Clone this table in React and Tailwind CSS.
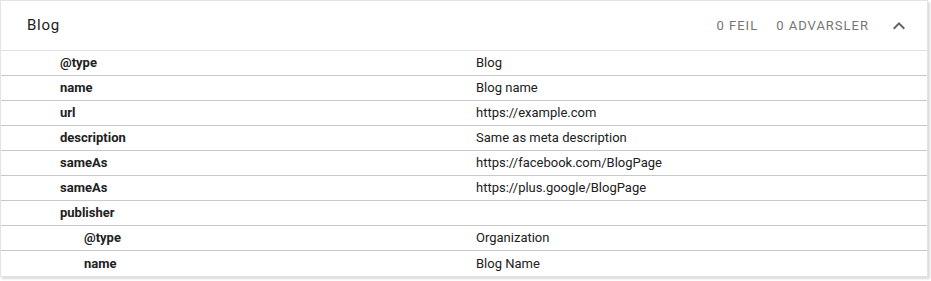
import React from "react";

const rows = [
  { key: "@type", value: "Blog", level: 0 },
  { key: "name", value: "Blog name", level: 0 },
  { key: "url", value: "https://example.com", level: 0 },
  { key: "description", value: "Same as meta description", level: 0 },
  { key: "sameAs", value: "https://facebook.com/BlogPage", level: 0 },
  { key: "sameAs", value: "https://plus.google/BlogPage", level: 0 },
  { key: "publisher", value: "", level: 0 },
  { key: "@type", value: "Organization", level: 1 },
  { key: "name", value: "Blog Name", level: 1 },
];

function ChevronUp() {
  return (
    <svg width="24" height="24" viewBox="0 0 24 24" className="text-[#616161]">
      <path d="M12 8l-6 6 1.41 1.41L12 10.83l4.59 4.58L18 14z" fill="currentColor" />
    </svg>
  );
}

export default function App() {
  return (
    <div className="bg-white w-[931px] h-[281px]" style={{ fontFamily: "Roboto, 'Liberation Sans', sans-serif" }}>
      <div className="w-[928px] border border-[#e3e3e3] bg-white shadow-[2px_2px_2px_rgba(0,0,0,0.14)]">
        <div className="h-[50px] flex items-center pl-[26px] pr-[16px] border-b border-[#e0e0e0]">
          <div className="text-[15px] tracking-[0.7px] text-[#212121] flex-1">Blog</div>
          <div className="text-[13px] tracking-[1px] text-[#757575] uppercase mr-[18px]">0 Feil</div>
          <div className="text-[13px] tracking-[1px] text-[#757575] uppercase mr-[18px]">0 Advarsler</div>
          <ChevronUp />
        </div>
        {rows.map((r, i) => (
          <div
            key={i}
            className={`flex h-[25px] items-center text-[13px] text-[#212121] ${i < rows.length - 1 ? "border-b border-[#c8c8c8]" : ""}`}
          >
            <div className={`w-[475px] font-bold ${r.level ? "pl-[83px]" : "pl-[59px]"}`}>{r.key}</div>
            <div>{r.value}</div>
          </div>
        ))}
      </div>
    </div>
  );
}
